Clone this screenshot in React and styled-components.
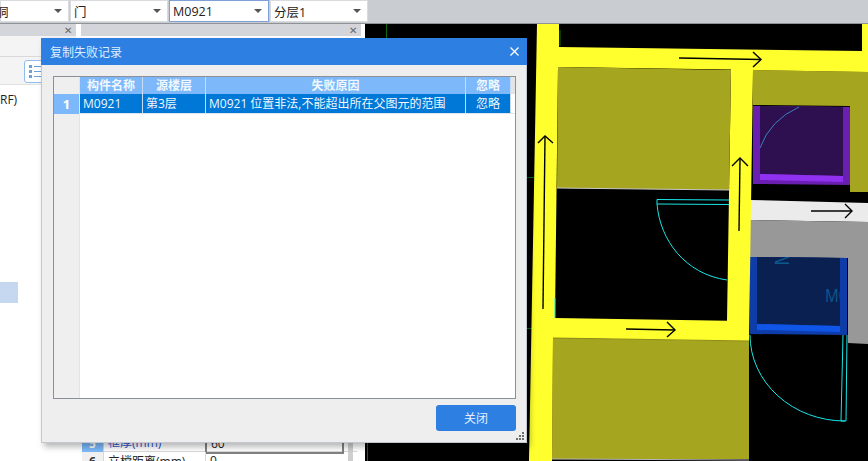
import styled, { createGlobalStyle } from "styled-components";

const GlobalStyle = createGlobalStyle`
  html, body {
    margin: 0;
    padding: 0;
    background: #fff;
    overflow: hidden;
  }
  * { box-sizing: border-box; }
`;

const FONT = `"Open Sans", "Noto Sans CJK SC", sans-serif`;

const Page = styled.div`
  position: relative;
  width: 868px;
  height: 461px;
  display: flex;
  flex-direction: column;
  overflow: hidden;
  font-family: ${FONT};
  font-size: 12px;
  color: #222;
`;

const Toolbar = styled.div`
  height: 24px;
  flex: none;
  display: flex;
  gap: 1px;
  background: #c9ccd0;
  border-bottom: 1px solid #8f9296;
`;

const Combo = styled.div`
  width: ${(p) => p.$w}px;
  height: 22px;
  display: flex;
  align-items: center;
  justify-content: space-between;
  padding: 0 6px 0 3px;
  background: #fff;
  font-size: 12.5px;
  text-indent: ${(p) => p.$indent || 0}px;
  border: 1px solid ${(p) => (p.$active ? "#7f9fd8" : "#d8dadd")};
`;

const Caret = styled.span`
  width: 0;
  height: 0;
  border-left: 4px solid transparent;
  border-right: 4px solid transparent;
  border-top: 4px solid #555;
`;

const Main = styled.div`
  flex: 1;
  min-height: 0;
  display: flex;
  overflow: hidden;
`;

const Side = styled.div`
  width: 365px;
  flex: none;
  display: flex;
  gap: 5px;
  padding-right: 4px;
  background: #fff;
`;

const Panel = styled.div`
  width: ${(p) => (p.$w ? `${p.$w}px` : "auto")};
  flex: ${(p) => (p.$w ? "none" : "1")};
  display: flex;
  flex-direction: column;
`;

const PanelHead = styled.div`
  height: 12px;
  flex: none;
  display: flex;
  align-items: center;
  justify-content: flex-end;
  padding-right: 4px;
  background: #d3d5da;
  color: #666;
  font-size: 10px;
  line-height: 1;
`;

const PanelBar = styled.div`
  height: 21px;
  flex: none;
  background: #f4f4f5;
  border-bottom: 1px solid #d9d9d9;
`;

const IconStrip = styled.div`
  height: 28px;
  flex: none;
  padding: 3px 0 0 24px;
  background: #f4f4f5;
  border-bottom: 1px solid #e2e2e2;
`;

const IconButton = styled.div`
  width: 30px;
  height: 23px;
  display: flex;
  flex-direction: column;
  justify-content: center;
  gap: 2px;
  padding-left: 4px;
  background: #fff;
  border: 1px solid #8fbdf0;
  border-radius: 3px;
`;

const ListLine = styled.span`
  display: block;
  width: 16px;
  height: 3px;
  border-left: 3px solid #6a9fd8;
  background: linear-gradient(#6a9fd8, #6a9fd8) 2px center / 100% 1px no-repeat;
`;

const TreeText = styled.div`
  padding: 6px 0 0 0;
  height: 197px;
  flex: none;
  font-size: 12px;
`;

const TreeSelected = styled.div`
  width: 18px;
  height: 21px;
  background: #c6d8f0;
`;

const PropTable = styled.div`
  margin-top: auto;
  margin-bottom: -10px;
  margin-right: 4px;
  margin-left: 1px;
  display: flex;
  flex-direction: column;
`;

const PropRow = styled.div`
  height: 19px;
  flex: none;
  display: grid;
  grid-template-columns: 21px 102px 139px 1fr;
  align-items: stretch;
  border-bottom: 1px solid #d8d8d8;
`;

const PropNum = styled.div`
  display: flex;
  align-items: center;
  justify-content: center;
  background: ${(p) => (p.$active ? "#7db9fa" : "#f0f0f0")};
  color: ${(p) => (p.$active ? "#fff" : "#333")};
  font-weight: 700;
`;

const PropName = styled.div`
  padding-left: 4px;
  color: ${(p) => (p.$blue ? "#2a52d0" : "#222")};
  font-size: 12px;
  border-left: 1px solid #d8d8d8;
  white-space: nowrap;
`;

const PropValue = styled.div`
  padding-left: 4px;
  border: ${(p) => (p.$active ? "2px solid #808080" : "0")};
  border-left: ${(p) => (p.$active ? "2px solid #808080" : "1px solid #d8d8d8")};
`;

const PropScroll = styled.div`
  margin: 0 4px;
  background: #cfcfcf;
  border-radius: 4px;
`;

const Cad = styled.svg`
  flex: 1;
  min-width: 0;
  display: block;
  background: #000;
`;

const Dialog = styled.div`
  position: absolute;
  left: 41px;
  top: 38px;
  width: 486px;
  height: 405px;
  display: flex;
  flex-direction: column;
  background: #eeeeee;
  border: 1px solid #c3c8d0;
  border-top: 0;
  box-shadow: 3px 4px 6px rgba(0, 0, 0, 0.28);
`;

const TitleBar = styled.div`
  height: 27px;
  flex: none;
  margin: 0 -1px;
  display: flex;
  align-items: center;
  justify-content: space-between;
  padding: 0 8px 0 9px;
  background: #2e7fe2;
  color: #dfeeff;
  font-size: 12px;
`;

const CloseGlyph = styled.svg`
  width: 9px;
  height: 9px;
  display: block;
`;

const Body = styled.div`
  flex: 1;
  min-height: 0;
  display: flex;
  flex-direction: column;
  padding: 11px 10px 0 11px;
`;

const Frame = styled.div`
  height: 323px;
  flex: none;
  display: grid;
  grid-template-columns: 26px 1fr;
  background: #fff;
  border: 1px solid #8a8f98;
`;

const RowHeads = styled.div`
  display: flex;
  flex-direction: column;
  background: #efefef;
  border-right: 1px solid #e4e4e4;
`;

const CornerCell = styled.div`
  height: 17px;
  background: #efefef;
`;

const RowNum = styled.div`
  height: 20px;
  display: flex;
  align-items: center;
  justify-content: center;
  background: #7db9fa;
  color: #fff;
  font-weight: 700;
  font-size: 13px;
`;

const GridArea = styled.div`
  display: flex;
  flex-direction: column;
`;

const Row = styled.div`
  display: grid;
  grid-template-columns: 63px 63px 260px 45px 4px;
  height: ${(p) => p.$h}px;
  background: ${(p) => p.$bg};
  color: #f0f7ff;
  border-bottom: ${(p) => (p.$line ? "1px solid #dfe5ec" : "0")};
`;

const Cell = styled.div`
  display: flex;
  align-items: center;
  justify-content: ${(p) => (p.$center ? "center" : "flex-start")};
  padding-left: ${(p) => (p.$center ? 0 : 3)}px;
  font-weight: ${(p) => (p.$bold ? 700 : 400)};
  border-right: 1px solid ${(p) => p.$sep};
  white-space: nowrap;
  line-height: 1;
`;

const Stub = styled.div`
  background: ${(p) => p.$bg};
`;

const Footer = styled.div`
  flex: 1;
  position: relative;
  display: flex;
  justify-content: flex-end;
  align-items: flex-start;
  padding-top: 6px;
`;

const CloseButton = styled.button`
  width: 80px;
  height: 26px;
  border: 0;
  border-radius: 3px;
  background: #2e7fe2;
  color: #e4f0ff;
  font-family: ${FONT};
  font-size: 12px;
  padding: 0;
`;

const Grip = styled.svg`
  position: absolute;
  right: -9px;
  bottom: 1px;
  width: 10px;
  height: 10px;
`;

const Room = ({ x, y, w, h, outer, inner, bar }) => (
  <g>
    <polygon points={`${x},${y} ${x + w},${y + 1} ${x + w},${y + h} ${x},${y + h - 1}`} fill={outer} />
    <polygon points={`${x + 7},${y} ${x + w - 7},${y + 1} ${x + w - 7},${y + h - 9} ${x + 7},${y + h - 11}`} fill={inner} />
    <polygon points={`${x + 7},${y + h - 11} ${x + w - 7},${y + h - 9} ${x + w - 7},${y + h - 3} ${x + 7},${y + h - 5}`} fill={bar} />
  </g>
);

const Arrow = ({ line, head }) => (
  <g fill="none" stroke="#000" strokeWidth="1.4">
    <polyline points={line} />
    <polyline points={head} />
  </g>
);

const CadDrawing = () => (
  <Cad viewBox="365 24 503 437">
    <defs>
      <clipPath id="blueRoom">
        <rect x="758" y="257" width="82" height="70" />
      </clipPath>
    </defs>

    <g stroke="#0a6a12" strokeWidth="1">
      <line x1="386.5" y1="24" x2="386.5" y2="40" />
      <line x1="367.5" y1="440" x2="367.5" y2="461" />
      <line x1="527" y1="177.5" x2="535" y2="177.5" />
      <line x1="526" y1="328.5" x2="535" y2="328.5" />
      <line x1="560" y1="30" x2="560" y2="46" />
    </g>

    <polygon points="753,70 868,72 868,192 850,192 850,106 753,105" fill="#a6a520" />
    <polygon points="553,338 749,341 749,459 552,459" fill="#a6a520" />

    <polygon points="750,200 868,203 868,222 750,220" fill="#ebebeb" />
    <polygon points="750,220 868,222 868,344 848,343 848,258 750,257" fill="#989898" />

    <Room x={753} y={106} w={97} h={79} outer="#6a1fb0" inner="#2e1050" bar="#9030f0" />
    <Room x={750} y={257} w={97} h={78} outer="#0e3ca8" inner="#0a2050" bar="#0f55e8" />

    <polygon
      points="537,24 559,24 559,47 862,51 862,24 868,24 868,72 753,70 749,341 727,341 553,338 552,461 529,461"
      fill="#ffff2d"
    />
    <polygon points="558,67 731,69.5 727,320.7 555,318" fill="#000" />
    <polygon points="558,67 731,70 729,190 557,188" fill="#a6a520" />
    <polyline points="557,188 729,190" fill="none" stroke="#c8c8c8" strokeWidth="1" />
    <polyline points="553,338 749,341" fill="none" stroke="#8c8b1c" strokeWidth="1" />
    <polyline points="552,459 749,460" fill="none" stroke="#b8b8b8" strokeWidth="1" />

    <g fill="none" stroke="#19e6e6" strokeWidth="1">
      <polyline points="729,200 657,199.5 657,204 729,204.5" />
      <path d="M657 204 C660 240 685 274 727 280" />
      <path d="M750 335 A95 86 0 0 0 845 421" />
      <polyline points="843,335 841,421 846,421 847,335" />
      <line x1="555" y1="298" x2="555" y2="318" />
    </g>
    <path d="M760 148 Q770 120 799 107" fill="none" stroke="#3a80c0" strokeWidth="1" />

    <g clipPath="url(#blueRoom)" fill="#0a5a90" fontFamily={FONT}>
      <text transform="translate(825,302) scale(0.8,1)" fontSize="19">M0</text>
      <text transform="translate(789,266) rotate(-90)" fontSize="20">M</text>
    </g>

    <Arrow line="679,58 761,59.5" head="753,52 761,59.5 753,67" />
    <Arrow line="543,309 545,136" head="538,143 545,136 553,143" />
    <Arrow line="739,231 740,158" head="732,166 740,158 748,166" />
    <Arrow line="626,329 675,330" head="667,322 675,330 667,337" />
    <Arrow line="811,211 852,211" head="845,204 852,211 845,218" />
  </Cad>
);

const combos = [
  { w: 69, text: "洞", indent: -8 },
  { w: 98, text: "门" },
  { w: 100, text: "M0921", active: true },
  { w: 98, text: "分层1" },
];

const sep = "#c8dcf5";

function App() {
  return (
    <Page>
      <GlobalStyle />
      <Toolbar>
        {combos.map((c) => (
          <Combo key={c.text} $w={c.w} $active={c.active} $indent={c.indent}>
            {c.text}
            <Caret />
          </Combo>
        ))}
      </Toolbar>

      <Main>
        <Side>
          <Panel $w={76}>
            <PanelHead>✕</PanelHead>
            <PanelBar />
            <IconStrip>
              <IconButton>
                <ListLine />
                <ListLine />
                <ListLine />
              </IconButton>
            </IconStrip>
            <TreeText>RF)</TreeText>
            <TreeSelected />
          </Panel>
          <Panel>
            <PanelHead>✕</PanelHead>
            <PropTable>
              <PropRow>
                <PropNum $active>5</PropNum>
                <PropName $blue>框厚(mm)</PropName>
                <PropValue $active>60</PropValue>
                <PropScroll />
              </PropRow>
              <PropRow>
                <PropNum>6</PropNum>
                <PropName>立樘距离(mm)</PropName>
                <PropValue>0</PropValue>
                <PropScroll />
              </PropRow>
            </PropTable>
          </Panel>
        </Side>
        <CadDrawing />
      </Main>

      <Dialog>
        <TitleBar>
          复制失败记录
          <CloseGlyph viewBox="0 0 9 9">
            <path d="M0.5 0.5 L8.5 8.5 M8.5 0.5 L0.5 8.5" stroke="#fff" strokeWidth="1.3" />
          </CloseGlyph>
        </TitleBar>
        <Body>
          <Frame>
            <RowHeads>
              <CornerCell />
              <RowNum>1</RowNum>
            </RowHeads>
            <GridArea>
              <Row $h={17} $bg="#7db9fa">
                <Cell $center $bold $sep={sep}>构件名称</Cell>
                <Cell $center $bold $sep={sep}>源楼层</Cell>
                <Cell $center $bold $sep={sep}>失败原因</Cell>
                <Cell $center $bold $sep={sep}>忽略</Cell>
                <Stub $bg="#e4e4e4" />
              </Row>
              <Row $h={20} $bg="#0078d7" $line>
                <Cell $sep={sep}>M0921</Cell>
                <Cell $sep={sep}>第3层</Cell>
                <Cell $sep={sep}>M0921 位置非法,不能超出所在父图元的范围</Cell>
                <Cell $center $sep={sep}>忽略</Cell>
                <Stub $bg="#fff" />
              </Row>
            </GridArea>
          </Frame>
          <Footer>
            <CloseButton>关闭</CloseButton>
            <Grip viewBox="0 0 10 10">
              <g fill="#6e6e6e">
                <rect x="7" y="1" width="2" height="2" />
                <rect x="4" y="4" width="2" height="2" />
                <rect x="7" y="4" width="2" height="2" />
                <rect x="1" y="7" width="2" height="2" />
                <rect x="4" y="7" width="2" height="2" />
                <rect x="7" y="7" width="2" height="2" />
              </g>
            </Grip>
          </Footer>
        </Body>
      </Dialog>
    </Page>
  );
}

export default App;
